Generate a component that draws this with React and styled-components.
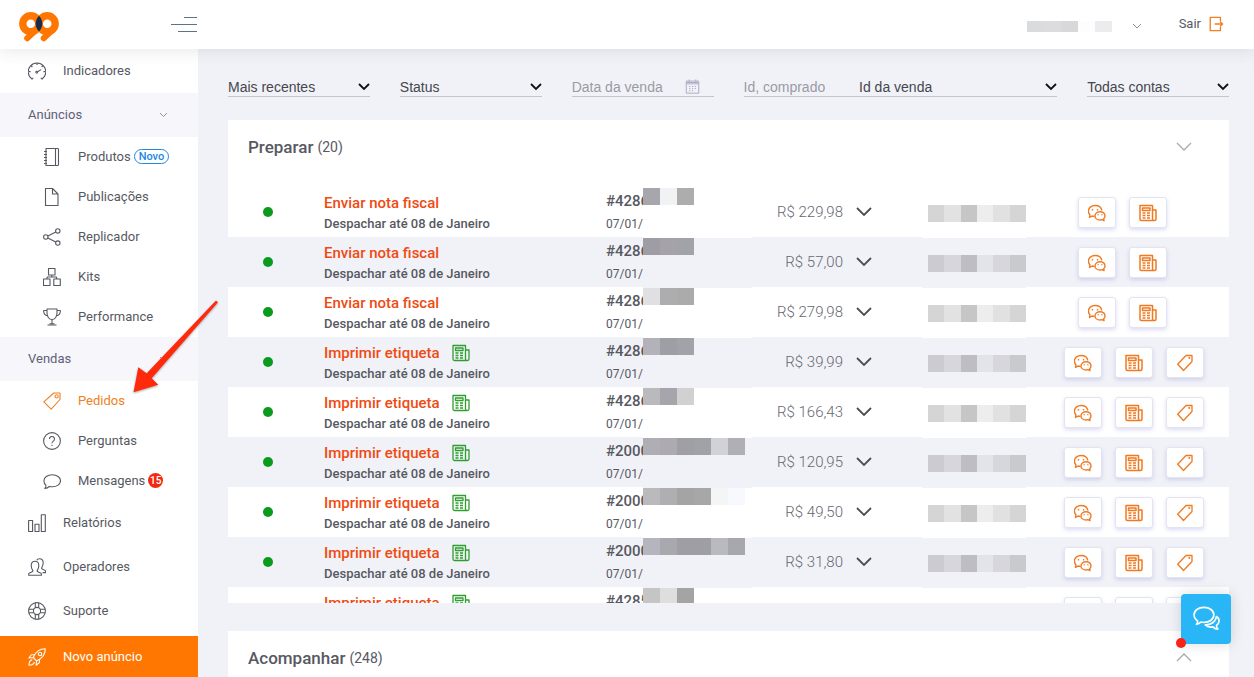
import React, { useState } from 'react';
import styled, { createGlobalStyle } from 'styled-components';

const GlobalStyle = createGlobalStyle`
  * {
    box-sizing: border-box;
  }

  body {
    background: #f1f2f7;
    color: #575962;
    font-family: Roboto, 'Liberation Sans', sans-serif;
    font-size: 13px;
    margin: 0;
  }

  button,
  input,
  select {
    font-family: inherit;
  }
`;

const Page = styled.div`
  display: flex;
  flex-direction: column;
  height: 100vh;
  overflow: hidden;
  position: relative;
`;

/* Top bar */

const TopBar = styled.header`
  align-items: center;
  background: #fff;
  box-shadow: 0 1px 15px 1px rgba(69, 65, 78, 0.12);
  display: flex;
  flex: none;
  height: 49px;
  justify-content: space-between;
  padding: 0 30px 2px 19px;
  position: relative;
  z-index: 2;
`;

const Brand = styled.div`
  align-items: center;
  display: flex;
  justify-content: space-between;
  width: 178px;
`;

const LogoLink = styled.a`
  display: flex;
  padding-top: 6px;
`;

const PlainButton = styled.button`
  background: none;
  border: 0;
  color: ${props => props.$color || 'inherit'};
  cursor: pointer;
  display: flex;
  padding: 0;
`;

const UserArea = styled.div`
  align-items: center;
  display: flex;
`;

const UserMenu = styled.button`
  align-items: center;
  background: none;
  border: 0;
  color: #8e8f99;
  display: flex;
  gap: 20px;
  padding: 6px 0 0;
`;

const Logout = styled.a`
  align-items: center;
  color: #575962;
  display: flex;
  gap: 7px;
  margin-left: 37px;
  text-decoration: none;
`;

const LogoutIcon = styled.span`
  color: #f08020;
  display: flex;
`;

/* Side menu */

const Body = styled.div`
  display: flex;
  flex: 1;
  min-height: 0;
`;

const Sidebar = styled.nav`
  background: #fff;
  display: flex;
  flex: none;
  flex-direction: column;
  width: 198px;
`;

const MenuLink = styled.a`
  align-items: center;
  color: ${props => (props.$active ? '#f08020' : '#575962')};
  display: flex;
  flex: none;
  gap: 17px;
  height: ${props => (props.$sub ? 40 : 44)}px;
  padding-left: ${props => (props.$sub ? 43 : 28)}px;
  text-decoration: none;
`;

const MenuText = styled.span`
  align-items: center;
  display: flex;
  gap: 3px;
  padding-bottom: 2px;
`;

const MenuSection = styled.button`
  align-items: center;
  background: #f6f6fb;
  border: 0;
  color: #5f6078;
  display: flex;
  flex: none;
  font-size: 13px;
  height: 44px;
  justify-content: space-between;
  padding: 0 30px 2px 28px;
`;

const SectionArrow = styled.span`
  color: #9394a3;
  display: flex;
  padding-top: 3px;
`;

const NewListing = styled(MenuLink)`
  background: #ff7700;
  color: #fff;
  height: 41px;
  margin-top: auto;
`;

const NewTag = styled.span`
  border: 1px solid #1e88e5;
  border-radius: 8px;
  color: #1e88e5;
  font-size: 11px;
  font-weight: 500;
  line-height: 13px;
  padding: 0 4px;
`;

const Counter = styled.span`
  background: #f4270f;
  border-radius: 50%;
  color: #fff;
  font-size: 10px;
  font-weight: 500;
  height: 15px;
  line-height: 15px;
  text-align: center;
  width: 15px;
`;

/* Filters */

const Main = styled.main`
  flex: 1;
  min-width: 0;
  padding: 28px 25px 0 30px;
`;

const Filters = styled.form`
  display: grid;
  font-family: 'Liberation Sans', Arial, sans-serif;
  gap: 30px;
  grid-template-columns: repeat(12, 1fr);
`;

const Field = styled.div`
  align-items: center;
  border-bottom: 1px solid #c4c5d0;
  display: flex;
  grid-column: span ${props => props.$span || 2};
  height: 20px;
  min-width: 0;
`;

const SelectBox = styled.div`
  align-items: center;
  color: #111;
  display: flex;
  flex: 1;
  min-width: 0;
`;

const Select = styled.select`
  appearance: none;
  background: none;
  border: 0;
  color: #45464e;
  flex: 1;
  font-size: 14px;
  min-width: 0;
  outline: 0;
  padding: 0;
`;

const TextInput = styled.input`
  background: none;
  border: 0;
  color: #45464e;
  flex: ${props => (props.$short ? '0 0 26%' : '1')};
  font-size: 14px;
  margin-right: ${props => (props.$short ? 34 : 0)}px;
  min-width: 0;
  outline: 0;
  padding: 0;

  &::placeholder {
    color: #9a9aa6;
  }
`;

const CalendarSlot = styled.span`
  color: #adacc6;
  display: flex;
  padding-right: 14px;
`;

/* Order panels */

const Panel = styled.section`
  background: #fff;
  margin-top: ${props => (props.$first ? 23 : 28)}px;
`;

const PanelHeader = styled.div`
  align-items: center;
  display: flex;
  height: 54px;
  justify-content: space-between;
  padding: 0 37px 0 20px;
`;

const PanelTitle = styled.h2`
  align-items: center;
  display: flex;
  font-size: 17px;
  font-weight: 500;
  gap: 4px;
  margin: 0;
`;

const Count = styled.span`
  font-size: 14px;
  font-weight: 400;
`;

const Scroller = styled.div`
  max-height: 429px;
  overflow-y: auto;
  padding-top: 13px;
  scrollbar-width: none;
`;

const Orders = styled.table`
  border-collapse: collapse;
  table-layout: fixed;
  width: 100%;
`;

const Col = styled.col`
  width: ${props => props.$width};
`;

const Row = styled.tr`
  --row: #fff;
  background: var(--row);
  height: 50px;

  &:nth-child(even) {
    --row: #f1f2f7;
  }
`;

const Cell = styled.td`
  padding: 0;
  position: relative;
  vertical-align: ${props => props.$align || 'middle'};
`;

const Dot = styled.span`
  background: #0a9a1e;
  border-radius: 50%;
  display: block;
  height: 10px;
  margin-left: 35px;
  width: 10px;
`;

const Action = styled.div`
  align-items: center;
  color: #f04a12;
  display: flex;
  font-size: 15px;
  font-weight: 500;
  gap: 12px;
  height: 20px;
  margin-top: 6px;
`;

const NoteMark = styled.span`
  color: #2e9e2e;
  display: flex;
`;

const Deadline = styled.div`
  font-size: 13px;
  font-weight: 500;
  line-height: 22px;
`;

const OrderId = styled.div`
  font-size: 15px;
  font-weight: 500;
  height: 20px;
  line-height: 20px;
  margin-top: 4px;
`;

const OrderDate = styled.div`
  font-size: 12px;
  line-height: 26px;
`;

const Price = styled.div`
  align-items: center;
  color: #666770;
  display: flex;
  font-size: 15px;
  font-weight: 300;
  gap: 13px;
  justify-content: flex-end;
  padding-right: 56px;
`;

const Cover = styled.div`
  background: var(--row);
  height: 50px;
  left: ${props => props.$left}px;
  padding: ${props => props.$pad || '0'};
  position: absolute;
  top: 1px;
  width: ${props => props.$width}px;
  z-index: 1;
`;

const Tiles = styled.div`
  display: flex;
  height: ${props => props.$height || 17}px;
`;

const Tile = styled.span`
  background: ${props => props.$color};
  width: 17px;
`;

const Actions = styled.div`
  display: flex;
  gap: 13px;
  padding-left: ${props => (props.$few ? 14 : 0)}px;
  padding-top: 1px;
`;

const ActionButton = styled.button`
  align-items: center;
  background: #fff;
  border: 1px solid #e4e4f0;
  border-radius: 3px;
  box-shadow: 0 2px 4px rgba(80, 80, 200, 0.2);
  color: #ef7a22;
  cursor: pointer;
  display: flex;
  height: 31px;
  justify-content: center;
  padding: 0;
  width: 38px;
`;

/* Things that float over the page */

const ChatButton = styled.button`
  align-items: center;
  background: #29b6f6;
  border: 0;
  border-radius: 4px;
  bottom: 33px;
  box-shadow: 0 0 14px rgba(0, 0, 0, 0.15);
  color: #fff;
  display: flex;
  height: 50px;
  justify-content: center;
  padding: 0;
  position: absolute;
  right: 23px;
  width: 50px;
  z-index: 3;
`;

const ChatAlert = styled.span`
  background: #fb2018;
  border-radius: 50%;
  bottom: -4px;
  height: 10px;
  left: -5px;
  position: absolute;
  width: 10px;
`;

const Pointer = styled.svg`
  filter: drop-shadow(0 1px 1px rgba(0, 0, 0, 0.35));
  left: 130px;
  pointer-events: none;
  position: absolute;
  top: 298px;
  z-index: 3;
`;

const shapes = {
  gauge: (
    <>
      <path d="M4.2 17.2A8.8 8.8 0 1 1 13.8 17.2" />
      <circle cx="8.7" cy="10.2" r=".9" />
      <path d="M9.5 9.8L13.2 7.6M9 1v2M3.2 3.8l1.2 1.2M14.8 3.8l-1.200 1.200M.8 9.600h1.800M15.400 9.600h1.800M4.200 17.200l1-1.400M13.800 17.200l-1-1.400" />
    </>
  ),
  notebook: (
    <path d="M3 .5h11.500a1 1 0 0 1 1 1v15a1 1 0 0 1-1 1H3zM12.500.5v17M1 3.500h3M1 6.500h3M1 9.500h3M1 12.500h3M1 15.500h3" />
  ),
  file: <path d="M2.500.5h7l5.500 5.500v11.500H2.500zM9.500.5V6H15" />,
  share: (
    <>
      <circle cx="2.800" cy="9" r="2.200" />
      <circle cx="14.800" cy="2.900" r="2.200" />
      <circle cx="14.800" cy="15.100" r="2.200" />
      <path d="M4.800 8l8-4.100M4.800 10l8 4.100" />
    </>
  ),
  boxes: (
    <path d="M5.500.5h6.500v6.500H5.500zM.5 11H7v6.500H.5zM10.800 11h6.500v6.500h-6.500zM8.800 7v2M3.700 11l.6-2h9l.7 2" />
  ),
  trophy: (
    <path d="M4 1h10v4c0 4-2.200 6.500-5 6.500S4 9 4 5zM4 2.500H.6C.6 6 2 7.500 5 8M14 2.500h3.400C17.400 6 16 7.500 13 8M9 11.500V16M4.500 17h9M6.500 15.800h5" />
  ),
  tag: (
    <>
      <path d="M10.800 1h6.200v6.500L8.200 17.200.8 9.800z" />
      <circle cx="13.600" cy="4.400" r="1.600" />
    </>
  ),
  tagSmall: (
    <>
      <path d="M10 1.500h6v6L7.500 16.500 1.700 10.200z" />
      <circle cx="13.300" cy="4" r=".4" />
    </>
  ),
  question: (
    <>
      <circle cx="9" cy="9" r="8.400" />
      <path d="M6.500 7a2.500 2.500 0 1 1 3.800 2.100c-.9.600-1.300 1-1.300 2.100M9 12.800v1.200" />
    </>
  ),
  bubble: (
    <path d="M9.200 2.800c4.700 0 8.300 2.500 8.300 6s-3.600 6-8.300 6c-1 0-2-.1-2.900-.4-1.100 1.300-2.700 2-4.500 2.100.9-.9 1.300-2 1.100-3.300C1.500 12.100.9 10.600.9 8.800c0-3.500 3.600-6 8.300-6z" />
  ),
  bars: <path d="M.6 6.500h4v11h-4zM7 10.200h4v7.300H7zM13.300.8h4v16.700h-4z" />,
  users: (
    <path d="M.7 17.300v-1.500c0-1 4.300-1.500 4.300-2.700C5 12.300 3.200 11 3.200 7.500 3.200 5 4.600 3.300 7 3.300S10.800 5 10.800 7.500C10.800 11 9 12.300 9 13.100c0 1.200 4.400 1.700 4.400 2.700v1.500zM8.700 2.300C9.300 1.200 10.300.7 11.500.7c2.300 0 3.700 1.700 3.700 4.100 0 3.500-1.700 4.600-1.700 5.500 0 1.200 4.100 1.700 4.100 2.700v1.600h-3" />
  ),
  buoy: (
    <>
      <circle cx="9" cy="9" r="8.400" />
      <circle cx="9" cy="9" r="3.600" />
      <path d="M7.300.8v5M10.700.8v5M7.300 12.200v5M10.700 12.200v5M.8 7.300h5M.8 10.700h5M12.200 7.300h5M12.200 10.700h5" />
    </>
  ),
  rocket: (
    <>
      <path d="M5.200 9.500C7.500 4 11 .8 17.300.8c0 6-3.200 9.700-8.700 12.100zM6.500 6.700H3.300L.9 10l4.300-.5M11.400 11.400v3.200L8.100 17.200l.5-4.300M4.300 11.600c-2.400.5-3.300 2.500-3.400 5.600 3.100 0 5-.9 5.500-3.300" />
      <circle cx="12" cy="6" r="1.700" />
    </>
  ),
  chats: (
    <>
      <path d="M6.500 12.400c-.9 0-1.500-.1-2.300-.4L1.500 13.400l.4-2.600C.9 9.700.4 8.600.4 7.100c0-3.200 2.900-5.600 6.700-5.600 3.500 0 6.300 2 6.700 5" />
      <path d="M12 7.700c2.900 0 5 1.800 5 4.200 0 1.200-.5 2.100-1.300 2.800l.3 2-2-1c-.7.200-1.300.3-2 .3-2.800 0-5-1.800-5-4.100s2.200-4.200 5-4.200z" />
      <path d="M4.500 5v1.400M9.500 5v1.400M10.200 10.300v1M13.800 10.300v1" />
    </>
  ),
  news: (
    <>
      <path d="M2.500 16.500h13a1.500 1.500 0 0 0 1.500-1.500V6h-3.500M13.500 15V1.500H1V15a1.500 1.500 0 0 0 1.500 1.500M13.500 6v9a1.500 1.500 0 0 0 1.500 1.500" />
      <path d="M3.500 4h7.500v2.500H3.500zM3.500 9h3M8 9h3M3.500 11.500h3M8 11.500h3M3.500 14h3M8 14h3" />
    </>
  ),
  calendar: (
    <path d="M1.500 2.500h15v14.500H1.500zM1.500 5.800h15M1.500 4.200h15M5 .5v3M13 .5v3M5 9h1.500M8.300 9h1.500M11.600 9h1.500M5 11.500h1.500M8.300 11.500h1.500M11.600 11.500h1.500M5 14h1.500M8.300 14h1.500" />
  ),
  exit: <path d="M14 5.500V1.500H2.500v15H14v-4M7.500 9H16.500M13.500 6.200L16.500 9l-3 2.800" />,
  talk: (
    <>
      <path d="M7.300.9C3.500.9.7 3 .7 5.900c0 1.700.9 3.100 2.400 4 .1 1-.2 1.700-.8 2.300 1.300-.1 2.300-.6 3-1.500.6.200 1.300.2 2 .2 3.700 0 6.600-2.100 6.600-5S11 .9 7.300.9z" />
      <path d="M15.600 7c1.100.6 1.800 1.600 1.800 2.900 0 1.200-.7 2.300-1.800 3 0 1 .4 1.800 1 2.500-1.400 0-2.500-.6-3.300-1.500-2 .4-4-.1-5.100-1.300 3.600.1 7-2 7.400-5.600z" />
    </>
  ),
};

const Icon = ({ name, size = 18, weight = 1.1 }) => (
  <svg
    width={size}
    height={size}
    viewBox="0 0 18 18"
    fill="none"
    stroke="currentColor"
    strokeWidth={weight}
    strokeLinejoin="round"
    aria-hidden="true"
  >
    {shapes[name]}
  </svg>
);

const Chevron = ({ width = 16, weight = 1.8, up }) => (
  <svg
    width={width}
    height={width / 2 + 2}
    viewBox={`0 0 ${width} ${width / 2 + 2}`}
    fill="none"
    stroke="currentColor"
    strokeWidth={weight}
    aria-hidden="true"
  >
    <path
      d={
        up
          ? `M1 ${width / 2}L${width / 2} 1L${width - 1} ${width / 2}`
          : `M1 1L${width / 2} ${width / 2}L${width - 1} 1`
      }
    />
  </svg>
);

const Logo = () => (
  <svg width="40" height="30" viewBox="0 0 40 30" aria-hidden="true">
    <g fill="none" stroke="#ff7700" strokeLinecap="round">
      <circle cx="11.800" cy="11.800" r="8" strokeWidth="7.400" />
      <circle cx="28.200" cy="11.800" r="8" strokeWidth="7.400" />
      <path d="M17.500 17.500L8.200 26.200M34 17.500L24.700 26.200" strokeWidth="6" />
    </g>
    <path d="M20 3.800c4.400 4.200 4.400 11.500 0 15.700-4.400-4.200-4.400-11.500 0-15.700z" fill="#1c2b4a" />
  </svg>
);

const adsMenu = [
  { icon: 'notebook', label: 'Produtos', isNew: true },
  { icon: 'file', label: 'Publicações' },
  { icon: 'share', label: 'Replicador' },
  { icon: 'boxes', label: 'Kits' },
  { icon: 'trophy', label: 'Performance' },
];

const salesMenu = [
  { icon: 'tag', label: 'Pedidos', active: true },
  { icon: 'question', label: 'Perguntas' },
  { icon: 'bubble', label: 'Mensagens', count: 15 },
];

const bottomMenu = [
  { icon: 'bars', label: 'Relatórios' },
  { icon: 'users', label: 'Operadores' },
  { icon: 'buoy', label: 'Suporte' },
];

const light = ['#d5d5d5', '#e2e2e2', '#c6c6c6', '#ededed', '#e1e1e1', '#d5d5d5'];
const dark = ['#cbcbd1', '#d6d6dc', '#bdbdc3', '#e3e4e9', '#d7d6dd', '#c9cace'];

const orders = [
  { id: '#4286', price: '229,98', tiles: ['#a7a6ac', '#f1f2f4', '#adadad'] },
  { id: '#4286', price: '57,00', tiles: ['#9d9da3', '#a5a3a9', '#a2a3a8'] },
  { id: '#4286', price: '279,98', tiles: ['#e0e0e2', '#adadaf', '#ababac'] },
  { id: '#4286', price: '39,99', label: true, tiles: ['#b2b2b8', '#9e9fa4', '#a2a3a8'] },
  { id: '#4286', price: '166,43', label: true, tiles: ['#bababc', '#a6a5ac', '#d1d1d2'] },
  {
    id: '#2000',
    price: '120,95',
    label: true,
    tiles: ['#aeaeb4', '#adabb1', '#9f9fa4', '#a1a2a7', '#d1d2d8', '#b0afb6'],
  },
  {
    id: '#2000',
    price: '49,50',
    label: true,
    tiles: ['#bababc', '#afafb1', '#a4a4a5', '#a7a7aa', '#f4f5f5', '#f8f9fc'],
  },
  {
    id: '#2000',
    price: '31,80',
    label: true,
    tiles: ['#b5b5c0', '#a8a8ae', '#9e9ea4', '#9e9ea4', '#b9b9c0', '#a7a7ad'],
  },
  { id: '#4285', price: '89,90', label: true, tiles: ['#c5c5c6', '#dededf', '#a4a4a5'] },
];

const MenuItem = ({ item, sub }) => (
  <MenuLink href="#" $sub={sub} $active={item.active}>
    <Icon name={item.icon} />
    <MenuText>
      {item.label}
      {item.isNew && <NewTag>Novo</NewTag>}
      {item.count && <Counter>{item.count}</Counter>}
    </MenuText>
  </MenuLink>
);

const Section = ({ label }) => (
  <MenuSection type="button">
    {label}
    <SectionArrow>
      <Chevron width={9} weight={1} />
    </SectionArrow>
  </MenuSection>
);

const FilterSelect = ({ label, options }) => {
  const [value, setValue] = useState(options[0]);

  return (
    <SelectBox>
      <Select aria-label={label} value={value} onChange={event => setValue(event.target.value)}>
        {options.map(option => (
          <option key={option}>{option}</option>
        ))}
      </Select>
      <Chevron width={12} weight={1.8} />
    </SelectBox>
  );
};

const Order = ({ order, index }) => (
  <Row>
    <Cell>
      <Dot />
    </Cell>
    <Cell $align="top">
      <Action>
        {order.label ? 'Imprimir etiqueta' : 'Enviar nota fiscal'}
        {order.label && (
          <NoteMark>
            <Icon name="news" weight={1.3} />
          </NoteMark>
        )}
      </Action>
      <Deadline>Despachar até 08 de Janeiro</Deadline>
    </Cell>
    <Cell $align="top">
      <OrderId>{order.id}</OrderId>
      <OrderDate>07/01/</OrderDate>
      <Cover $left={37} $width={109}>
        <Tiles>
          {order.tiles.map((color, i) => (
            <Tile key={i} $color={color} />
          ))}
        </Tiles>
      </Cover>
    </Cell>
    <Cell>
      <Price>
        R$ {order.price}
        <PlainButton type="button" aria-label="Ver itens" $color="#4c4d57">
          <Chevron />
        </PlainButton>
      </Price>
    </Cell>
    <Cell>
      <Cover $left={-6} $width={104} $pad="17px 0 0 6px">
        <Tiles>
          {(index % 2 ? dark : light).map((color, i) => (
            <Tile key={i} $color={color} />
          ))}
        </Tiles>
      </Cover>
    </Cell>
    <Cell>
      <Actions $few={!order.label}>
        <ActionButton type="button" aria-label="Mensagens">
          <Icon name="chats" weight={1.4} />
        </ActionButton>
        <ActionButton type="button" aria-label="Nota fiscal">
          <Icon name="news" weight={1.5} />
        </ActionButton>
        {order.label && (
          <ActionButton type="button" aria-label="Etiqueta">
            <Icon name="tagSmall" weight={1.3} />
          </ActionButton>
        )}
      </Actions>
    </Cell>
  </Row>
);

const App = () => {
  return (
    <Page>
      <GlobalStyle />
      <TopBar>
        <Brand>
          <LogoLink href="#" aria-label="Início">
            <Logo />
          </LogoLink>
          <PlainButton type="button" aria-label="Menu" $color="#5c7288">
            <svg width="26" height="16" viewBox="0 0 26 16" stroke="currentColor" aria-hidden="true">
              <path d="M13 1.500h13M0 8.500h26M7 15.500h19" />
            </svg>
          </PlainButton>
        </Brand>
        <UserArea>
          <UserMenu type="button" aria-label="Conta">
            <Tiles $height={11}>
              <Tile $color="#dadbdd" />
              <Tile $color="#dcdcde" />
              <Tile $color="#d8d8da" />
              <Tile $color="#fdfdfd" />
              <Tile $color="#ececee" />
            </Tiles>
            <Chevron width={10} weight={1} />
          </UserMenu>
          <Logout href="#">
            Sair
            <LogoutIcon>
              <Icon name="exit" size={16} weight={1.5} />
            </LogoutIcon>
          </Logout>
        </UserArea>
      </TopBar>
      <Body>
        <Sidebar>
          <MenuItem item={{ icon: 'gauge', label: 'Indicadores' }} />
          <Section label="Anúncios" />
          {adsMenu.map(item => (
            <MenuItem key={item.label} item={item} sub />
          ))}
          <Section label="Vendas" />
          {salesMenu.map(item => (
            <MenuItem key={item.label} item={item} sub />
          ))}
          {bottomMenu.map(item => (
            <MenuItem key={item.label} item={item} />
          ))}
          <NewListing href="#">
            <Icon name="rocket" />
            Novo anúncio
          </NewListing>
        </Sidebar>
        <Main>
          <Filters>
            <Field>
              <FilterSelect label="Ordenar" options={['Mais recentes', 'Mais antigos']} />
            </Field>
            <Field>
              <FilterSelect label="Status" options={['Status', 'Preparar', 'Acompanhar']} />
            </Field>
            <Field>
              <TextInput aria-label="Data da venda" placeholder="Data da venda" />
              <CalendarSlot>
                <Icon name="calendar" size={15} weight={1.2} />
              </CalendarSlot>
            </Field>
            <Field $span={4}>
              <TextInput $short aria-label="Busca" placeholder="Id, comprador" />
              <FilterSelect label="Buscar por" options={['Id da venda', 'Comprador']} />
            </Field>
            <Field>
              <FilterSelect label="Contas" options={['Todas contas']} />
            </Field>
          </Filters>
          <Panel $first>
            <PanelHeader>
              <PanelTitle>
                Preparar <Count>(20)</Count>
              </PanelTitle>
              <PlainButton type="button" aria-label="Recolher" $color="#a9a9b5">
                <Chevron weight={1.3} />
              </PlainButton>
            </PanelHeader>
            <Scroller>
              <Orders>
                <colgroup>
                  <Col $width="96px" />
                  <Col />
                  <Col $width="150px" />
                  <Col $width="172px" />
                  <Col $width="136px" />
                  <Col $width="165px" />
                </colgroup>
                <tbody>
                  {orders.map((order, index) => (
                    <Order key={order.price} order={order} index={index} />
                  ))}
                </tbody>
              </Orders>
            </Scroller>
          </Panel>
          <Panel>
            <PanelHeader>
              <PanelTitle>
                Acompanhar <Count>(248)</Count>
              </PanelTitle>
              <PlainButton type="button" aria-label="Expandir" $color="#a9a9b5">
                <Chevron weight={1.3} up />
              </PlainButton>
            </PanelHeader>
          </Panel>
        </Main>
      </Body>
      <ChatButton type="button" aria-label="Chat">
        <Icon name="talk" size={27} />
        <ChatAlert />
      </ChatButton>
      <Pointer width="92" height="100" viewBox="0 0 92 100" aria-hidden="true">
        <path d="M86 2.500l2 1.800L21.700 80.300l6.600 6.400L3.500 94.300 8.300 69.300l8.400 6z" fill="#ff2a0c" />
      </Pointer>
    </Page>
  );
};

export default App;
